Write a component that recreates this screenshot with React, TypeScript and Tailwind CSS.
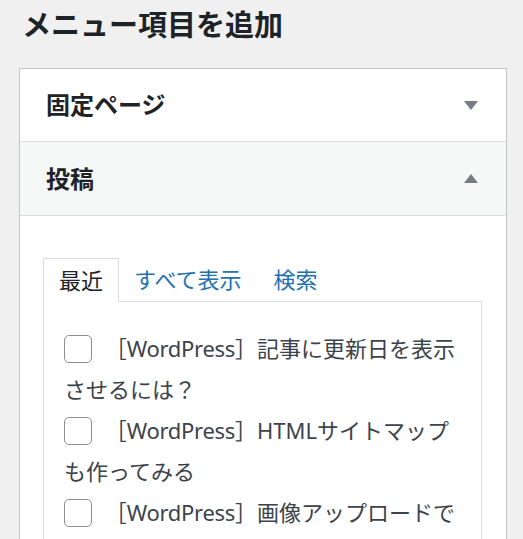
import React from "react";

const FONT = { fontFamily: '"Noto Sans", "Noto Sans CJK JP", sans-serif' };

function Arrow({ up }: { up?: boolean }) {
  return (
    <svg width="14" height="9" viewBox="0 0 14 9" className="block">
      {up ? (
        <polygon points="7,0 14,9 0,9" fill="#787c82" />
      ) : (
        <polygon points="0,0 14,0 7,9" fill="#787c82" />
      )}
    </svg>
  );
}

function Checkbox() {
  return (
    <span className="inline-block w-[28px] h-[28px] rounded-[5px] border border-[#8c8f94] bg-white align-middle mr-[7px] -mt-[4px]" />
  );
}

const posts: { title: string; rest: string }[] = [
  { title: "記事に更新日を表示", rest: "させるには？" },
  { title: "HTMLサイトマップ", rest: "も作ってみる" },
  { title: "画像アップロードで", rest: "" },
];

export default function App() {
  return (
    <div className="h-[539px] bg-[#f0f0f1] pl-[19px] pr-[16px] overflow-hidden" style={FONT}>
      <h2 className="text-[29px] font-bold text-[#1d2327] leading-[50px] pl-[3px] h-[68px]">
        メニュー項目を追加
      </h2>
      <div className="border border-[#c3c4c7] bg-white">
        <div className="h-[73px] flex items-center justify-between pl-[26px] pr-[28px] border-b border-[#dcdcde]">
          <span className="text-[24px] font-bold text-[#1d2327]">固定ページ</span>
          <Arrow />
        </div>
        <div className="h-[74px] flex items-center justify-between pl-[26px] pr-[28px] bg-[#f6f7f7] border-b border-[#dcdcde]">
          <span className="text-[24px] font-bold text-[#1d2327]">投稿</span>
          <Arrow up />
        </div>
        <div className="pt-[42px] pl-[23px] pr-[24px] h-[400px]">
          <div className="flex text-[22px] leading-[43px] relative z-10">
            <span className="px-[15px] border border-b-0 border-[#dcdcde] bg-white text-[#1d2327] h-[44px] -mb-[1px]">
              最近
            </span>
            <span className="pl-[15px] pr-[17px] text-[#2271b1]">すべて表示</span>
            <span className="px-[15px] text-[#2271b1]">検索</span>
          </div>
          <div className="border border-[#dcdcde] pt-[26px] pl-[20px] pr-[16px] h-[300px] text-[22px] leading-[41px] text-[#3c434a]">
            {posts.map((p, i) => (
              <div key={i} className="whitespace-nowrap">
                <Checkbox />
                {" "}
                ［<span className="tracking-[-0.3px]">WordPress</span>］{p.title}
                {p.rest && <br />}
                {p.rest}
              </div>
            ))}
          </div>
        </div>
      </div>
    </div>
  );
}
